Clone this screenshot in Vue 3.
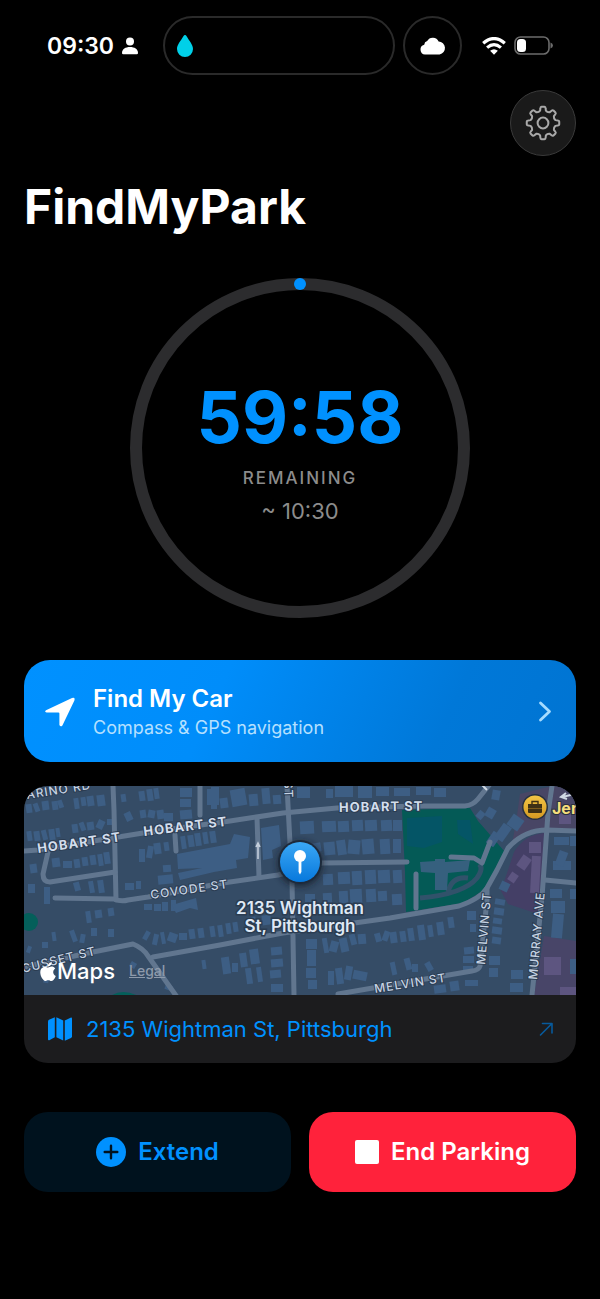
<script setup>
const point = (r, deg) => {
  const a = (deg * Math.PI) / 180
  return [(20 + r * Math.sin(a)).toFixed(2), (20 - r * Math.cos(a)).toFixed(2)].join(' ')
}

// Eight rounded teeth joined by shallow curved valleys.
const gear = Array.from({ length: 8 }, (_, k) => {
  const c = k * 45
  return (
    `${k ? 'L' : 'M'}${point(12.8, c - 13)} L${point(15, c - 10)} Q${point(16.3, c - 9)} ${point(16.3, c - 5)} ` +
    `L${point(16.3, c + 5)} Q${point(16.3, c + 9)} ${point(15, c + 10)} L${point(12.8, c + 13)} ` +
    `Q${point(11.4, c + 22.5)} ${point(12.8, c + 32)}`
  )
}).join(' ') + 'Z'

const roads = [
  'M89 0 L90 24 L92 114',
  'M176 0 V29',
  'M151 49 L152 65',
  'M0 65 L14 64 L119 47 L206 35 L259 27 L313 22 L399 20 H441 Q449 19 454 13 L466 -2',
  'M24 66 L19 88 Q19 96 26 96 L91 86',
  'M31 112 L90 113 Q97 116 104 114 L124 111 L199 97 L254 89 L298 77 L383 76',
  'M233 32 L235 91',
  'M263 0 L266 57 L268 94 L270 209',
  'M0 181 L64 167 L109 158 Q119 162 124 170 L153 211',
  'M129 171 L196 159 L259 147 L366 132 L435 120 Q456 113 463 102 L473 84 L484 62 Q500 44 523 44 L552 45',
  'M528 0 L524 27 L518 111 L508 209',
  'M521 94 L552 97',
  'M463 102 L463 114 L456 180 Q455 184 448 185 L314 208',
]

const parkRoads = ['M392 88 V122', 'M427 71 L450 72 L458 77 L466 56']

// x, y, width, height, rotation
const houses = [
  [2, 18, 6, 9, -8], [10, 17, 5, 9, -20], [18, 15, 7, 9, -8], [28, 15, 6, 9, -8], [34, 14, 5, 8, -20],
  [50, 12, 5, 11, -8], [57, 11, 5, 9, -8], [63, 10, 7, 10, -8], [73, 9, 8, 11, -8],
  [97, 8, 5, 8, -8], [115, 5, 6, 10, -8], [123, 3, 6, 12, -8], [130, 2, 5, 11, -8],
  [101, 26, 7, 9, -25], [116, 24, 6, 8, -8], [124, 24, 7, 8, 10], [133, 24, 7, 9, -8], [140, 27, 9, 8, 0],
  [156, 2, 12, 9, 0], [156, 13, 11, 8, 0], [156, 24, 12, 9, -5], [187, 14, 6, 9, 0], [187, 1, 8, 9, 0], [196, 12, 8, 10, -8],
  [3, 45, 5, 10, -8], [10, 45, 6, 10, -8], [18, 44, 5, 10, -15], [25, 43, 6, 11, -8], [32, 42, 4, 9, -8],
  [48, 38, 6, 9, -8], [56, 36, 5, 9, -20], [63, 36, 7, 8, -8], [73, 34, 7, 9, 25], [83, 33, 5, 6, 0],
  [28, 72, 8, 9, -8], [39, 75, 9, 7, 0], [50, 73, 6, 9, -8], [58, 71, 6, 9, -8], [66, 69, 6, 10, -8], [74, 68, 5, 12, -8], [80, 66, 6, 12, -8],
  [6, 78, 7, 9, -8], [4, 98, 7, 9, 0], [20, 101, 6, 17, 0], [50, 96, 6, 9, -15], [65, 95, 5, 12, -10], [74, 94, 6, 13, -8],
  [101, 97, 9, 7, 0], [112, 95, 5, 8, 0],
  [115, 63, 6, 13, 0], [123, 60, 6, 12, 10], [130, 57, 7, 11, -8], [140, 56, 5, 9, -8],
  [157, 50, 5, 13, -8], [164, 49, 6, 12, -8], [171, 47, 6, 13, -8], [179, 46, 5, 12, -8], [186, 45, 6, 12, -8],
  [139, 79, 8, 7, -5], [134, 89, 15, 9, -5], [120, 118, 8, 6, 0], [130, 118, 7, 7, 0], [138, 116, 6, 9, 0], [147, 114, 5, 11, 0],
  [62, 125, 5, 12, -8], [71, 124, 7, 8, -8], [84, 122, 6, 8, -8], [67, 142, 6, 8, 0],
  [3, 160, 4, 7, 20], [18, 156, 6, 6, 0], [28, 146, 4, 9, -8], [47, 144, 5, 12, -20], [56, 148, 5, 9, 10],
  [84, 143, 6, 8, 0],
  [120, 145, 5, 9, 30], [129, 148, 5, 11, 12], [137, 146, 4, 12, -10], [144, 147, 9, 9, 20], [155, 147, 8, 7, 0], [165, 143, 6, 10, -8], [174, 142, 6, 10, -8],
  [106, 176, 6, 6, 30], [141, 199, 7, 5, 20], [178, 174, 4, 9, -8], [20, 188, 5, 9, 10],
  [186, 140, 5, 11, -8], [194, 139, 5, 12, -8], [202, 137, 5, 11, -8], [209, 136, 5, 10, -8], [224, 131, 8, 9, -8], [238, 129, 9, 10, -8],
  [198, 171, 8, 17, -8], [208, 177, 6, 9, 0], [216, 167, 7, 14, -8], [226, 163, 9, 15, -8], [222, 182, 6, 16, -8], [233, 181, 5, 15, -8],
  [247, 161, 11, 8, -5], [247, 173, 12, 8, -5], [246, 184, 11, 8, -5], [247, 198, 12, 8, 0],
  [183, 3, 12, 16, 0], [207, 3, 15, 17, -10], [225, 8, 9, 12, -5], [238, 2, 8, 16, -5], [249, 9, 8, 9, -5],
  [273, 1, 13, 11, 0], [302, 3, 7, 9, 0], [311, 0, 18, 11, 0], [334, 0, 14, 12, 0], [352, 1, 13, 9, 0], [370, 2, 16, 8, 0], [392, 1, 15, 8, 0], [410, 2, 12, 9, 0],
  [276, 35, 14, 13, -3], [298, 35, 14, 11, -3], [314, 35, 11, 11, -3], [328, 34, 11, 11, -3], [341, 34, 12, 11, -3], [357, 34, 11, 11, -3],
  [288, 57, 9, 9, -10], [300, 56, 11, 13, -5], [313, 54, 9, 15, -8], [324, 54, 12, 14, 5], [338, 53, 12, 15, -5], [356, 53, 10, 15, -3], [369, 34, 9, 11, 0], [369, 53, 8, 14, 0],
  [299, 88, 10, 11, -3], [314, 86, 12, 12, -3], [328, 85, 10, 14, -3], [341, 84, 11, 14, -3], [354, 84, 12, 13, -3], [369, 84, 9, 13, -3],
  [281, 108, 10, 8, 0], [299, 107, 9, 11, -3], [315, 105, 9, 12, -3], [326, 103, 12, 14, -3], [342, 103, 10, 13, -3], [354, 105, 9, 10, -3], [368, 108, 10, 11, -3],
  [282, 153, 11, 10, 0], [283, 164, 9, 16, 0], [282, 182, 10, 10, 0], [284, 194, 9, 9, 0],
  [299, 152, 5, 15, -10], [306, 155, 8, 11, 15], [316, 152, 8, 14, -12], [326, 148, 6, 11, -15], [334, 148, 8, 10, -5],
  [351, 147, 6, 9, -15], [359, 145, 6, 10, 20], [366, 146, 7, 11, -8], [376, 145, 6, 11, -8], [384, 142, 6, 13, -8], [394, 139, 7, 15, -8], [404, 139, 5, 12, -8], [413, 136, 7, 13, -8], [424, 131, 6, 11, -8],
  [304, 185, 6, 14, 0], [312, 182, 7, 16, -8], [321, 180, 7, 14, 10], [329, 185, 14, 9, 12], [367, 176, 5, 13, -12], [381, 172, 6, 12, -15], [388, 178, 6, 8, 0], [402, 176, 6, 9, -30],
  [443, 125, 9, 9, 0], [446, 138, 6, 8, 0], [440, 161, 10, 7, -5], [439, 170, 11, 7, 0], [439, 180, 10, 5, 0], [441, 194, 13, 6, 0], [410, 199, 12, 8, -8], [426, 195, 9, 10, -8],
  [471, 113, 10, 6, 10], [470, 122, 10, 7, 8], [469, 132, 9, 6, 8], [468, 141, 10, 7, 8], [468, 151, 9, 7, 8], [465, 170, 11, 9, 0], [465, 182, 9, 9, 0], [476, 96, 9, 9, 25],
  [487, 184, 12, 9, 0], [486, 197, 13, 9, 0], [453, 25, 7, 8, 40], [462, 22, 9, 10, 30], [468, 4, 8, 10, 10],
  [465, 46, 9, 14, 35], [474, 38, 10, 17, 35], [485, 30, 13, 13, 35],
  [530, 51, 15, 8, 0], [529, 75, 18, 9, 0], [533, 65, 9, 15, 20], [526, 103, 12, 9, 0], [527, 115, 14, 12, 0], [528, 128, 11, 24, 5],
  [546, 50, 6, 10, 0], [546, 103, 6, 10, 0], [546, 173, 6, 15, 0],
]

const purpleHouses = [
  [505, 56, 12, 11, 0], [507, 70, 9, 37, 3], [495, 70, 10, 13, 35], [485, 87, 8, 9, 35], [520, 171, 17, 18, 0],
  [535, 27, 12, 11, 0], [536, 201, 16, 8, 0],
]

const labels = [
  { text: 'ARINO RD', x: 3, y: 13, r: -9, major: false },
  { text: 'HOBART ST', x: 14, y: 67, r: -8, major: true },
  { text: 'HOBART ST', x: 120, y: 50, r: -7, major: true },
  { text: 'HOBART ST', x: 315, y: 26, r: -1, major: true },
  { text: 'COVODE ST', x: 127, y: 113, r: -8, major: false },
  { text: 'CUSSET ST', x: -1, y: 187, r: -14, major: false },
  { text: 'MELVIN ST', x: 351, y: 207, r: -9, major: false },
  { text: 'MELVIN ST', x: 461, y: 179, r: -85, major: false },
  { text: 'MURRAY AVE', x: 513, y: 194, r: -85, major: false },
  { text: 'ST', x: 260, y: -5, r: 88, major: false },
]
</script>

<template>
  <div class="screen">
    <header class="status">
      <div class="clock">
        <span>09:30</span>
        <svg width="16" height="18" viewBox="0 0 16 18" fill="#fff" aria-hidden="true">
          <circle cx="8" cy="4.5" r="4" />
          <path d="M0 16 C0 12 3.5 10 8 10 S16 12 16 16 Q16 17.3 14.7 17.3 H1.3 Q0 17.3 0 16Z" />
        </svg>
      </div>
      <div class="island">
        <svg width="16" height="22" viewBox="0 0 16 22" aria-hidden="true">
          <path d="M8 0 Q8.9 0 9.6 1.3 C12 5.5 16 9.8 16 14 A8 8 0 0 1 0 14 C0 9.8 4 5.5 6.4 1.3 Q7.1 0 8 0Z" fill="#00d0e8" />
        </svg>
      </div>
      <div class="bubble">
        <svg width="26" height="18" viewBox="0 0 26 18" aria-hidden="true">
          <path d="M5 17.5 A5 5 0 0 1 4.2 7.7 A4.2 4.2 0 0 1 7.2 4 A6.3 6.3 0 0 1 18.6 4.6 A6.5 6.5 0 0 1 19.6 17.5Z" fill="#fff" />
        </svg>
      </div>
      <div class="signals">
        <svg width="24" height="18" viewBox="0 0 24 18" fill="none" stroke="#fff" stroke-width="3.2" aria-hidden="true">
          <path d="M1.2 6.3 Q12 -3.2 22.8 6.3" />
          <path d="M5.1 10.6 Q12 4.6 18.9 10.6" />
          <path d="M12 17.8 L8.1 13.8 Q12 10.6 15.9 13.8Z" fill="#fff" stroke="none" />
        </svg>
        <svg width="39" height="19" viewBox="0 0 39 19" aria-hidden="true">
          <rect x="1" y="1" width="34" height="17" rx="5.5" fill="none" stroke="#6c6c6c" stroke-width="1.6" />
          <rect x="3" y="3" width="9" height="13" rx="3.5" fill="#fff" />
          <path d="M36.5 6.5 Q39 7.5 39 9.5 T36.5 12.5Z" fill="#6c6c6c" />
        </svg>
      </div>
    </header>

    <div class="toolbar">
      <button class="settings" type="button" aria-label="Settings">
        <svg width="40" height="40" viewBox="0 0 40 40" fill="none" stroke="#a9a9a9" stroke-width="2" stroke-linejoin="round" aria-hidden="true">
          <path :d="gear" />
          <circle cx="20" cy="20" r="5.4" />
        </svg>
      </button>
    </div>

    <h1>FindMyPark</h1>

    <section class="timer">
      <svg class="ring" viewBox="0 0 340 340" aria-hidden="true">
        <circle cx="170" cy="170" r="164" fill="none" stroke="#2c2c2e" stroke-width="12" />
        <circle cx="170" cy="6" r="6" fill="#0091ff" />
      </svg>
      <div class="readout">
        <div class="time">59:58</div>
        <div class="caption">REMAINING</div>
        <div class="until">~ 10:30</div>
      </div>
    </section>

    <button class="find" type="button">
      <svg width="32" height="32" viewBox="0 0 32 32" aria-hidden="true">
        <path d="M2 15.2 L28 3 Q31.4 2 30.4 5.4 L18.4 30.4 Q16.6 32.4 15.4 30 V18.4 Q15.4 17.4 14.4 17.4 H2.6 Q0 16.8 2 15.2Z" fill="#fff" />
      </svg>
      <span class="find-text">
        <span class="find-title">Find My Car</span>
        <span class="find-sub">Compass &amp; GPS navigation</span>
      </span>
      <svg width="14" height="22" viewBox="0 0 14 22" fill="none" stroke="#a6dcff" stroke-width="2.8" stroke-linecap="round" stroke-linejoin="round" aria-hidden="true">
        <path d="M2.5 3 L11.5 11.5 L2.5 20" />
      </svg>
    </button>

    <section class="place">
      <div class="map">
        <svg class="map-art" viewBox="0 0 552 209" preserveAspectRatio="xMidYMid slice" role="img" aria-label="Map of the parked car">
          <defs>
            <linearGradient id="pinFill" x1="0" y1="0" x2="0" y2="1">
              <stop offset="0" stop-color="#3ba8f5" />
              <stop offset="1" stop-color="#0778dc" />
            </linearGradient>
            <linearGradient id="shopFill" x1="0" y1="0" x2="0" y2="1">
              <stop offset="0" stop-color="#f3c545" />
              <stop offset="1" stop-color="#d59a22" />
            </linearGradient>
            <filter id="soft" x="-50%" y="-50%" width="200%" height="200%">
              <feGaussianBlur stdDeviation="3" />
            </filter>
          </defs>
          <rect width="552" height="209" fill="#354c66" />

          <path d="M496 8 L528 0 H552 V44 H523 Q500 44 488 58 L492 36Z" fill="#484665" />
          <path d="M520 47 L518 111 L514 128 L484 118 L477 105 L490 66 Q500 49 520 47Z" fill="#443f66" />
          <path d="M520 150 L552 155 V209 H510Z" fill="#484568" />
          <path d="M378 24 L446 22 L454 35 L481 66 L463 102 L439 117 L382 126 L381 86Z" fill="#045a56" />
          <path d="M383 32 L418 30 V56 L400 62 L383 60Z M433 34 L446 34 L449 58 L434 48Z" fill="#045566" />
          <path d="M396 112 Q440 108 453 92 Q460 82 455 78 M424 106 Q428 90 444 92" fill="none" stroke="#31526a" stroke-width="5" />
          <circle cx="5" cy="136" r="9" fill="#045f5a" />
          <path d="M88 209 Q99 203 112 209Z" fill="#045f5a" />

          <g fill="#3d5e84">
            <rect v-for="(h, i) in houses" :key="i" :x="h[0]" :y="h[1]" :width="h[2]" :height="h[3]" :transform="`rotate(${h[4]} ${h[0] + h[2] / 2} ${h[1] + h[3] / 2})`" />
            <path d="M153 68 L206 58 L210 48 L226 51 L224 72 L212 74 L213 82 L190 86 L156 94 L154 87 L178 82 L154 83Z" />
            <path d="M237 42 L255 39 L257 60 L248 64 L249 72 L239 74Z" />
            <path d="M148 119 L172 112 L174 124 L166 122 L152 127Z" />
          </g>
          <path d="M396 76 L411 75 V73 H421 V76 L446 74 L444 85 L424 87 L423 104 H411 V87 L397 86Z" fill="#36607e" />
          <g fill="#5d5580">
            <rect v-for="(h, i) in purpleHouses" :key="i" :x="h[0]" :y="h[1]" :width="h[2]" :height="h[3]" :transform="`rotate(${h[4]} ${h[0] + h[2] / 2} ${h[1] + h[3] / 2})`" />
          </g>

          <g fill="none" stroke="#61768f" stroke-width="5" stroke-linecap="round" stroke-linejoin="round">
            <path v-for="d in roads" :key="d" :d="d" />
            <path v-for="d in parkRoads" :key="d" :d="d" />
          </g>
          <path d="M234 73 V58 M232 61 L234 57 L236 61" fill="none" stroke="#c3cedb" stroke-width="1.6" />
          <path d="M551 8 L538 11 M542 7 L537 11 L543 13 M455 -4 L463 4" fill="none" stroke="#d0d9e3" stroke-width="2" />

          <text v-for="(l, i) in labels" :key="i" :class="['street', { major: l.major }]" :transform="`translate(${l.x} ${l.y}) rotate(${l.r})`">{{ l.text }}</text>

          <circle cx="511" cy="21" r="13" fill="#27313f" />
          <circle cx="511" cy="21" r="11.5" fill="url(#shopFill)" />
          <path d="M504 18 H518 V26 Q518 27 517 27 H505 Q504 27 504 26Z" fill="#3e3115" />
          <path d="M508 18 V15.5 H514 V18" fill="none" stroke="#3e3115" stroke-width="1.4" />
          <path d="M504 22.5 H518" stroke="#a87a22" stroke-width="0.6" />
          <text class="shop" x="528" y="28">Jer</text>

          <circle cx="276" cy="78" r="23" fill="#141c28" opacity="0.7" filter="url(#soft)" />
          <circle cx="276" cy="76" r="22" fill="#1d2a3b" />
          <circle cx="276" cy="76" r="20" fill="url(#pinFill)" />
          <circle cx="276" cy="70" r="6" fill="#fff" />
          <path d="M274.6 75 H277.4 V86 L276 88.5 L274.6 86Z" fill="#fff" />
          <text class="pin-label" x="276" y="128">2135 Wightman</text>
          <text class="pin-label" x="276" y="146">St, Pittsburgh</text>
        </svg>
        <div class="credit">
          <span class="brand">
            <svg width="16" height="19" viewBox="2 0 20 24" fill="#fff" aria-hidden="true">
              <path d="M12.152 6.896c-.948 0-2.415-1.078-3.96-1.04-2.04.027-3.91 1.183-4.961 3.014-2.117 3.675-.546 9.103 1.519 12.09 1.013 1.454 2.208 3.09 3.792 3.039 1.52-.065 2.09-.987 3.935-.987 1.831 0 2.35.987 3.96.948 1.637-.026 2.676-1.48 3.676-2.948 1.156-1.688 1.636-3.325 1.662-3.415-.039-.013-3.182-1.221-3.22-4.857-.026-3.04 2.48-4.494 2.597-4.559-1.429-2.09-3.623-2.324-4.39-2.376-2-.156-3.675 1.09-4.61 1.09z" />
              <path d="M15.53 3.83c.843-1.012 1.4-2.427 1.245-3.83-1.207.052-2.662.805-3.532 1.818-.78.896-1.454 2.338-1.273 3.714 1.338.104 2.715-.688 3.559-1.701" />
            </svg>
            <span>Maps</span>
          </span>
          <a class="legal" href="#legal">Legal</a>
        </div>
      </div>
      <a class="address" href="#map">
        <svg width="24" height="24" viewBox="0 0 24 24" fill="#0091ff" aria-hidden="true">
          <path d="M0 4.6 Q0 3.4 1 2.8 L6.8 0.2 V20.3 L1.3 23.2 Q0 23.6 0 22.3Z" />
          <path d="M8.4 0.2 L15.2 3.6 V23.6 L8.4 20.2Z" />
          <path d="M16.8 3.6 L22.5 0.7 Q24 0.2 24 1.6 V19.2 Q24 20.4 23 20.9 L16.8 23.7Z" />
        </svg>
        <span class="address-text">2135 Wightman St, Pittsburgh</span>
        <svg width="16" height="16" viewBox="0 0 16 16" fill="none" stroke="#075a9c" stroke-width="1.6" stroke-linecap="round" stroke-linejoin="round" aria-hidden="true">
          <path d="M2.5 14 L14 2.5 M4.5 2.5 H14 V12" />
        </svg>
      </a>
    </section>

    <div class="actions">
      <button class="action extend" type="button">
        <svg width="30" height="30" viewBox="0 0 30 30" aria-hidden="true">
          <circle cx="15" cy="15" r="15" fill="#0091ff" />
          <path d="M15 8.7 V21.3 M8.7 15 H21.3" stroke="#00121e" stroke-width="2.4" stroke-linecap="round" />
        </svg>
        <span>Extend</span>
      </button>
      <button class="action end" type="button">
        <svg width="24" height="24" viewBox="0 0 24 24" aria-hidden="true">
          <rect width="24" height="24" rx="2" fill="#fff" />
        </svg>
        <span>End Parking</span>
      </button>
    </div>
  </div>
</template>

<style>
body {
  margin: 0;
  background: #000;
}
</style>

<style scoped>
.screen {
  box-sizing: border-box;
  min-height: 100vh;
  padding: 16px 24px 32px;
  background: #000;
  color: #fff;
  font-family: Inter, "Liberation Sans", sans-serif;
}

button {
  border: 0;
  margin: 0;
  font: inherit;
  color: inherit;
  cursor: pointer;
}

svg {
  display: block;
  flex: none;
}

.status {
  display: flex;
  align-items: center;
  justify-content: center;
  gap: 8px;
}

.clock {
  display: flex;
  flex: 1;
  align-items: center;
  gap: 8px;
  padding-left: 23px;
  font-size: 23px;
  font-weight: 600;
  line-height: 28px;
}

.island {
  box-sizing: border-box;
  display: flex;
  align-items: center;
  width: 232px;
  height: 59px;
  padding-left: 12px;
  border: 2px solid #2a2a2a;
  border-radius: 30px;
}

.bubble {
  box-sizing: border-box;
  display: flex;
  align-items: center;
  justify-content: center;
  width: 59px;
  height: 59px;
  border: 2px solid #2a2a2a;
  border-radius: 50%;
}

.signals {
  display: flex;
  align-items: center;
  justify-content: flex-end;
  gap: 8px;
  padding: 0 23px 0 12px;
}

.toolbar {
  display: flex;
  justify-content: flex-end;
  margin-top: 15px;
}

.settings {
  box-sizing: border-box;
  display: flex;
  align-items: center;
  justify-content: center;
  width: 66px;
  height: 66px;
  padding: 0;
  border: 1px solid #3a3a3a;
  border-radius: 50%;
  background: #1a1a1a;
}

h1 {
  margin: 20px 0 0;
  font-size: 48px;
  font-weight: 700;
  line-height: 62px;
}

.timer {
  display: grid;
  justify-items: center;
  align-items: center;
  margin-top: 40px;
}

.ring,
.readout {
  grid-area: 1 / 1;
}

.ring {
  width: 340px;
  max-width: 100%;
}

.readout {
  text-align: center;
}

.time {
  color: #0091ff;
  font-size: 71px;
  font-weight: 700;
  line-height: 90px;
}

.caption {
  color: #8c8c8c;
  font-size: 17px;
  font-weight: 500;
  line-height: 24px;
  letter-spacing: 2px;
  margin-top: 4px;
}

.until {
  color: #8c8c8c;
  font-size: 22px;
  line-height: 28px;
  margin-top: 7px;
}

.find {
  display: flex;
  align-items: center;
  gap: 17px;
  width: 100%;
  margin-top: 42px;
  padding: 22px 24px 22px 20px;
  border-radius: 26px;
  background: linear-gradient(115deg, #0091ff 0%, #008dfa 35%, #0078d8 75%, #0074d2 100%);
  text-align: left;
}

.find-text {
  display: flex;
  flex: 1;
  flex-direction: column;
}

.find-title {
  font-size: 24px;
  font-weight: 600;
  line-height: 34px;
}

.find-sub {
  color: #b5e0ff;
  font-size: 18px;
  line-height: 24px;
}

.place {
  margin-top: 24px;
  border-radius: 24px;
  background: #1c1c1e;
  overflow: hidden;
}

.map {
  position: relative;
}

.map-art {
  width: 100%;
  height: 209px;
}

.street {
  fill: #c6d3e3;
  stroke: #2b3c51;
  stroke-width: 2px;
  paint-order: stroke;
  font-size: 12px;
  font-weight: 500;
  letter-spacing: 1px;
}

.street.major {
  fill: #d3deec;
  font-size: 13px;
  font-weight: 700;
}

.shop {
  fill: #f5de7c;
  stroke: #2b3040;
  stroke-width: 2px;
  paint-order: stroke;
  font-size: 16px;
  font-weight: 700;
}

.pin-label {
  fill: #dfe9f5;
  stroke: #2b3c51;
  stroke-width: 3px;
  paint-order: stroke;
  font-size: 17px;
  font-weight: 600;
  text-anchor: middle;
}

.credit {
  position: absolute;
  left: 16px;
  bottom: 10px;
  display: flex;
  align-items: center;
  gap: 14px;
}

.brand {
  display: flex;
  align-items: center;
  gap: 1px;
  font-size: 22px;
  font-weight: 500;
  line-height: 28px;
}

.legal {
  color: #8d9aab;
  font-size: 14px;
  font-weight: 500;
  line-height: 20px;
}

.address {
  display: flex;
  align-items: center;
  gap: 14px;
  padding: 20px 22px 20px 24px;
  color: #0091ff;
  font-size: 22px;
  line-height: 28px;
  text-decoration: none;
}

.address-text {
  flex: 1;
}

.actions {
  display: grid;
  grid-template-columns: 1fr 1fr;
  gap: 18px;
  margin-top: 49px;
}

.action {
  display: flex;
  align-items: center;
  justify-content: center;
  gap: 12px;
  padding: 24px 12px;
  border-radius: 24px;
  font-size: 24px;
  font-weight: 600;
  line-height: 32px;
}

.extend {
  background: #00121e;
  color: #0091ff;
}

.end {
  background: #ff223b;
}
</style>
